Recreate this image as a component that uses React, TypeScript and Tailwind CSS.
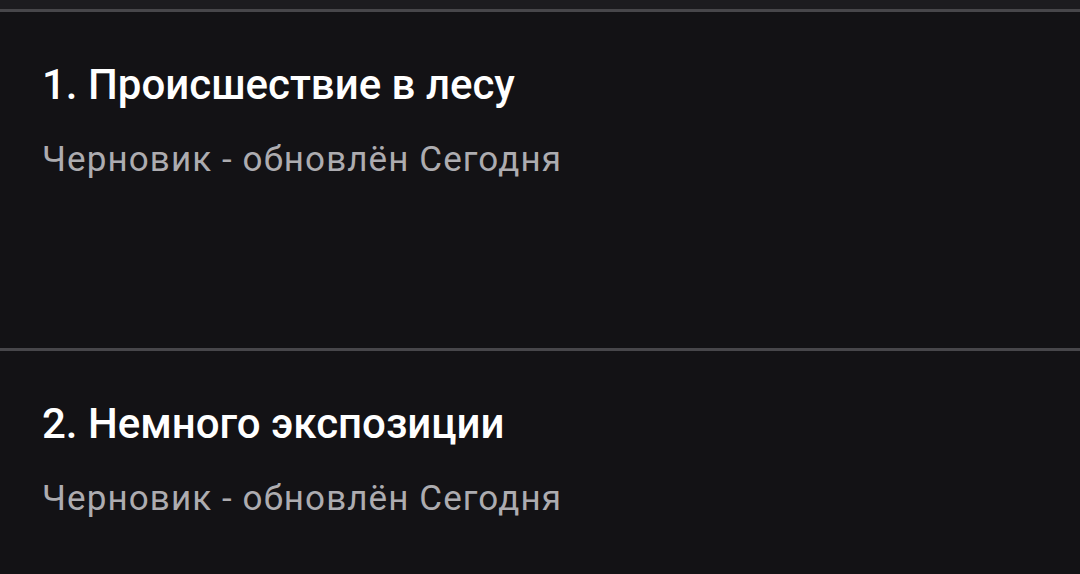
import React from "react";

const items = [
  { title: "1. Происшествие в лесу", sub: "Черновик - обновлён Сегодня" },
  { title: "2. Немного экспозиции", sub: "Черновик - обновлён Сегодня" },
];

export default function App() {
  return (
    <div
      className="w-[1080px] h-[574px] overflow-hidden bg-[#131215]"
      style={{ fontFamily: "Roboto, 'Noto Sans', sans-serif" }}
    >
      <div className="h-[9px] bg-[#1c1b1f]" />
      {items.map((it) => (
        <div key={it.title} className="border-t-[3px] border-[#47464a] h-[339px] pl-[42px] pt-[49px]">
          <div className="text-[42px] leading-[48px] font-medium text-white">{it.title}</div>
          <div className="mt-[29px] text-[35px] leading-[44px] tracking-[1.1px] text-[#adacb0]">{it.sub}</div>
        </div>
      ))}
    </div>
  );
}
